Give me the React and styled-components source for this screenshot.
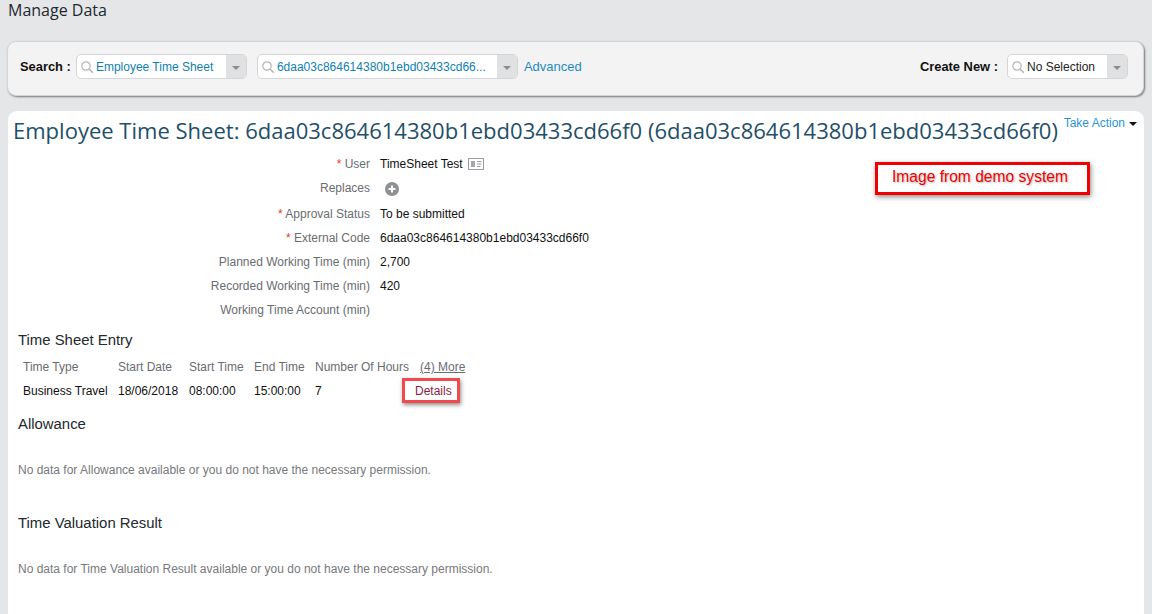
import React from "react";
import styled, { createGlobalStyle } from "styled-components";

const GlobalStyle = createGlobalStyle`
  html, body {
    margin: 0;
    padding: 0;
    height: 614px;
    overflow: hidden;
    background: #e4e6e8;
    font-family: "Liberation Sans", Arial, sans-serif;
    font-size: 12px;
  }
`;

const Page = styled.div`
  height: 614px;
  padding: 0 8px;
  box-sizing: border-box;
  overflow: hidden;
`;

const PageTitle = styled.h1`
  margin: 0;
  height: 41px;
  box-sizing: border-box;
  font: 400 16px/20px "Open Sans", sans-serif;
  color: #22292f;
`;

const SearchBar = styled.div`
  display: flex;
  align-items: center;
  height: 55px;
  margin-left: -1px;
  padding: 0 15px 4px 12px;
  box-sizing: border-box;
  background: #f3f3f3;
  border: 1px solid #d3d5d7;
  border-radius: 9px;
  box-shadow: 1px 1px 2px #777;
`;

const BarLabel = styled.span`
  font-size: 12.9px;
  font-weight: 700;
  color: #111;
  margin-right: ${(p) => p.$gap}px;
  white-space: nowrap;
`;

const Combo = styled.div`
  display: flex;
  width: ${(p) => p.$width}px;
  height: 25px;
  margin-right: ${(p) => p.$gap || 0}px;
  box-sizing: border-box;
  background: #fff;
  border: 1px solid #d4d6d8;
  border-radius: 5px;
  overflow: hidden;
`;

const ComboText = styled.span`
  flex: 1;
  display: flex;
  align-items: center;
  gap: 2px;
  padding-left: 3px;
  font-size: 12px;
  color: ${(p) => p.$color};
  white-space: nowrap;
`;

const ComboArrow = styled.span`
  width: 20px;
  display: flex;
  align-items: center;
  justify-content: center;
  background: #dfe1e3;

  &::after {
    content: "";
    margin-top: 2px;
    border-left: 4px solid transparent;
    border-right: 4px solid transparent;
    border-top: 4px solid #8b8e91;
  }
`;

const AdvancedLink = styled.a`
  margin-left: 6px;
  font-size: 13px;
  color: #1f8ac0;
`;

const Spacer = styled.div`
  flex: 1;
`;

const Card = styled.div`
  position: relative;
  height: 520px;
  margin-top: 15px;
  padding: 5px 7px 0 5px;
  box-sizing: border-box;
  background: #fff;
  border-radius: 9px 9px 0 0;
`;

const TitleRow = styled.div`
  display: flex;
  justify-content: space-between;
  align-items: flex-start;
`;

const CardTitle = styled.h2`
  margin: 0;
  font: 400 22.02px/28px "Open Sans", sans-serif;
  color: #1f4f68;
  white-space: nowrap;
`;

const TakeAction = styled.a`
  display: flex;
  align-items: center;
  gap: 4px;
  margin-top: -1px;
  font-size: 12px;
  line-height: 16px;
  color: #2b95d0;
  white-space: nowrap;

  &::after {
    content: "";
    margin-top: 2px;
    border-left: 4px solid transparent;
    border-right: 4px solid transparent;
    border-top: 4px solid #111;
  }
`;

const Form = styled.div`
  display: grid;
  grid-template-columns: 357px 1fr;
  column-gap: 10px;
  margin-top: 8px;
`;

const Label = styled.div`
  height: ${(p) => p.$h || 24}px;
  line-height: 24px;
  text-align: right;
  color: #6a6d70;
`;

const Required = styled.span`
  color: #e4392c;
`;

const Value = styled.div`
  display: flex;
  align-items: center;
  gap: 5px;
  height: ${(p) => p.$h || 24}px;
  color: #111;
`;

const SectionTitle = styled.h3`
  margin: ${(p) => p.$top}px 0 0 5px;
  font-weight: 400;
  font-size: 14.9px;
  line-height: 18px;
  color: #22292f;
`;

const Table = styled.div`
  display: grid;
  grid-template-columns: 95px 71px 65px 61px 105px auto;
  justify-content: start;
  margin: 6px 0 0 10px;
  line-height: 24px;
`;

const Head = styled.div`
  color: #6a6d70;
  white-space: nowrap;
`;

const MoreLink = styled(Head)`
  text-decoration: underline;
`;

const Cell = styled.div`
  color: #111;
  white-space: nowrap;
`;

const DetailsCell = styled.div`
  position: relative;
  margin-left: -5px;
  color: #8e1b3f;
`;

const DetailsMark = styled.span`
  position: absolute;
  left: -13px;
  top: -1px;
  width: 58px;
  height: 25px;
  box-sizing: border-box;
  border: 3px solid #f04a4e;
  box-shadow: 1px 2px 4px rgba(0, 0, 0, 0.45);
`;

const EmptyNote = styled.p`
  margin: ${(p) => p.$top}px 0 0 5px;
  line-height: 16px;
  color: #77797c;
`;

const DemoNote = styled.div`
  position: absolute;
  left: 867px;
  top: 51px;
  width: 215px;
  height: 33px;
  box-sizing: border-box;
  padding-left: 14px;
  border: 3px solid #f00000;
  box-shadow: 1px 2px 5px rgba(0, 0, 0, 0.45);
  font-size: 15.6px;
  line-height: 24px;
  color: #f00000;
  text-shadow: 1px 1px 2px rgba(0, 0, 0, 0.3);
`;

const SearchIcon = () => (
  <svg width="14" height="14" viewBox="0 0 14 14" fill="none" stroke="#b4b6b8" strokeWidth="1.2">
    <circle cx="6" cy="6" r="4.2" />
    <path d="M9 9l3.8 3.8" strokeWidth="1.6" />
  </svg>
);

const CardIcon = () => (
  <svg width="16" height="12" viewBox="0 0 16 12" fill="none">
    <rect x="0.5" y="0.5" width="15" height="11" stroke="#9a9c9f" fill="#fff" />
    <rect x="3" y="3" width="4" height="6" fill="#a5a7aa" />
    <path d="M9 3.5h4.5M9 6h4.5M9 8.5h3.5" stroke="#9a9c9f" />
  </svg>
);

const AddIcon = styled(({ className }) => (
  <svg className={className} width="16" height="16" viewBox="0 0 16 16">
    <circle cx="8" cy="8" r="7" fill="#8e9194" />
    <path d="M8 4.5v7M4.5 8h7" stroke="#fff" strokeWidth="2" />
  </svg>
))`
  margin-left: 4px;
`;

const ComboBox = ({ width, gap, color, children }) => (
  <Combo $width={width} $gap={gap}>
    <ComboText $color={color}>
      <SearchIcon />
      {children}
    </ComboText>
    <ComboArrow />
  </Combo>
);

const fields = [
  { label: "User", required: true, value: <>TimeSheet Test <CardIcon /></> },
  { label: "Replaces", value: <AddIcon />, tall: true },
  { label: "Approval Status", required: true, value: "To be submitted" },
  { label: "External Code", required: true, value: "6daa03c864614380b1ebd03433cd66f0" },
  { label: "Planned Working Time (min)", value: "2,700" },
  { label: "Recorded Working Time (min)", value: "420" },
  { label: "Working Time Account (min)", value: "" },
];

const columns = ["Time Type", "Start Date", "Start Time", "End Time", "Number Of Hours"];
const entry = ["Business Travel", "18/06/2018", "08:00:00", "15:00:00", "7"];

export default function App() {
  return (
    <Page>
      <GlobalStyle />
      <PageTitle>Manage Data</PageTitle>

      <SearchBar>
        <BarLabel $gap={5}>Search :</BarLabel>
        <ComboBox width={171} gap={10} color="#0f7fb0">Employee Time Sheet</ComboBox>
        <ComboBox width={261} color="#0f7fb0">6daa03c864614380b1ebd03433cd66...</ComboBox>
        <AdvancedLink>Advanced</AdvancedLink>
        <Spacer />
        <BarLabel $gap={9}>Create New :</BarLabel>
        <ComboBox width={121} color="#222">No Selection</ComboBox>
      </SearchBar>

      <Card>
        <TitleRow>
          <CardTitle>Employee Time Sheet: 6daa03c864614380b1ebd03433cd66f0 (6daa03c864614380b1ebd03433cd66f0)</CardTitle>
          <TakeAction>Take Action</TakeAction>
        </TitleRow>

        <Form>
          {fields.map((f) => (
            <React.Fragment key={f.label}>
              <Label $h={f.tall ? 26 : 24}>
                {f.required && <Required>* </Required>}
                {f.label}
              </Label>
              <Value $h={f.tall ? 26 : 24}>{f.value}</Value>
            </React.Fragment>
          ))}
        </Form>

        <SectionTitle $top={9}>Time Sheet Entry</SectionTitle>
        <Table>
          {columns.map((c) => <Head key={c}>{c}</Head>)}
          <MoreLink>(4) More</MoreLink>
          {entry.map((c) => <Cell key={c}>{c}</Cell>)}
          <DetailsCell>
            Details
            <DetailsMark />
          </DetailsCell>
        </Table>

        <SectionTitle $top={12}>Allowance</SectionTitle>
        <EmptyNote $top={29}>No data for Allowance available or you do not have the necessary permission.</EmptyNote>

        <SectionTitle $top={36}>Time Valuation Result</SectionTitle>
        <EmptyNote $top={29}>No data for Time Valuation Result available or you do not have the necessary permission.</EmptyNote>

        <DemoNote>Image from demo system</DemoNote>
      </Card>
    </Page>
  );
}
